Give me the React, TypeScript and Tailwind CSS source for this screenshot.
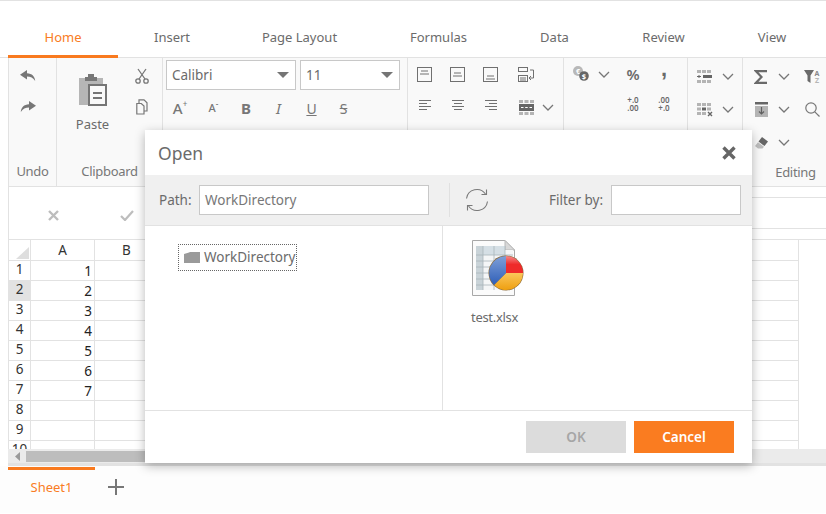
import type { ReactNode } from "react";

const tabs = [
  { name: "Home", w: "w-[110px]", active: true },
  { name: "Insert", w: "w-[108px]" },
  { name: "Page Layout", w: "w-[147px]" },
  { name: "Formulas", w: "w-[131px]" },
  { name: "Data", w: "w-[101px]" },
  { name: "Review", w: "w-[117px]" },
  { name: "View", w: "w-[100px]" },
];

const columns = ["A", "B", "C", "D", "E", "F", "G", "H", "I", "J", "K", ""];
const rows = [1, 2, 3, 4, 5, 6, 7, 8, 9, 10];

const Chevron = () => (
  <svg width="12" height="7" viewBox="0 0 12 7" fill="none" stroke="#777" strokeWidth="1.3" className="shrink-0">
    <path d="M1 1l5 5 5-5" />
  </svg>
);

const Caret = () => (
  <svg width="12" height="6" viewBox="0 0 12 6" fill="#757575">
    <path d="M0 0h12L6 6z" />
  </svg>
);

const Undo = ({ flip }: { flip?: boolean }) => (
  <svg width="16" height="12" viewBox="0 0 16 12" fill="#777" className={flip ? "-scale-x-100" : ""}>
    <path d="M7 0L0 4.8 7 9.6V6.6c3.4 0 6.3 1.400 8.200 4.400C15 6.800 12 3.200 7 3.200z" />
  </svg>
);

const PasteIcon = () => (
  <svg width="30" height="32" viewBox="0 0 30 32">
    <path d="M1 4h24v27H1z" fill="#b6b6b6" />
    <path d="M7 3h3V0h6v3h3v4H7z" fill="#777" />
    <path d="M11 11h17v20H11z" fill="#f9f9f9" stroke="#757575" strokeWidth="2" />
    <path d="M15 18h9v2h-9zM15 23h9v2h-9z" fill="#757575" />
  </svg>
);

const Scissors = () => (
  <svg width="14" height="16" viewBox="0 0 14 16" fill="none" stroke="#777" strokeWidth="1.300">
    <circle cx="3" cy="13" r="2.200" />
    <circle cx="11" cy="13" r="2.200" />
    <path d="M4 11L11 1M10 11L3 1" />
  </svg>
);

const CopyIcon = () => (
  <svg width="13" height="16" viewBox="0 0 13 16" fill="none" stroke="#777" strokeWidth="1.200">
    <path d="M3 4V.8h5l3 3V12H8" />
    <path d="M.8 4.500h4.500L8 7v8H.8z" fill="#f9f9f9" />
  </svg>
);

const VAlign = ({ y }: { y: number }) => (
  <svg width="16" height="16" viewBox="0 0 16 16" fill="none" stroke="#707070">
    <rect x=".5" y=".5" width="14" height="14" />
    <path d={`M4 ${y}h7M3 ${y + 3}h9`} />
  </svg>
);

const WrapIcon = () => (
  <svg width="17" height="15" viewBox="0 0 17 15" fill="none" stroke="#707070">
    <rect x=".5" y=".5" width="9" height="4" />
    <rect x=".5" y="8.500" width="9" height="6" />
    <path d="M2 11h6M2 13h6M12 3h3.500v8H11M13 9l-2 2 2 2" />
  </svg>
);

const HAlign = ({ mode }: { mode: "l" | "c" | "r" }) => {
  const short = mode === "l" ? "M0 3.500h8M0 9.500h8" : mode === "c" ? "M2 3.500h8M2 9.500h8" : "M4 3.500h8M4 9.500h8";
  return (
    <svg width="12" height="11" viewBox="0 0 12 11" fill="none" stroke="#707070">
      <path d={`M0 .5h12M0 6.500h12 ${short}`} />
    </svg>
  );
};

const MergeIcon = () => (
  <svg width="15" height="15" viewBox="0 0 15 15" className="shrink-0">
    <path d="M0 0h4v3H0zM5.500 0h4v3h-4zM11 0h4v3h-4zM0 12h4v3H0zM5.500 12h4v3h-4zM11 12h4v3h-4z" fill="#b4b4b4" />
    <path d="M0 4h15v7H0z" fill="#666" />
    <path d="M2 7h2.500v1H2zM6.200 7h2.500v1H6.200zM10.500 7H13v1h-2.500z" fill="#fff" />
  </svg>
);

const CurrencyIcon = () => (
  <svg width="16" height="15" viewBox="0 0 16 15">
    <circle cx="5" cy="5" r="5" fill="#b8b8b8" />
    <text x="5" y="7.500" textAnchor="middle" fontSize="7" fontWeight="700" fill="#fff" fontFamily="'Noto Sans', sans-serif">€</text>
    <circle cx="11" cy="10" r="4.800" fill="#666" />
    <text x="11" y="12.600" textAnchor="middle" fontSize="7.500" fontWeight="700" fill="#fff" fontFamily="'Noto Sans', sans-serif">$</text>
  </svg>
);

const CellsIcon = ({ del }: { del?: boolean }) => (
  <svg width="16" height="14" viewBox="0 0 16 14">
    {del ? (
      <>
        <path d="M0 0h4v3H0zM5 0h4v3H5zM10 0h4v3h-4zM0 4.500h4v3H0zM10 4.500h4v3h-4zM0 9h4v3H0zM5 9h4v3H5z" fill="#b4b4b4" />
        <path d="M5 4.500h4v3H5z" fill="#666" />
        <path d="M11 9l4 4M15 9l-4 4" stroke="#666" strokeWidth="1.400" />
      </>
    ) : (
      <>
        <path d="M0 0h4v3H0zM5 0h4v3H5zM10 0h4v3h-4zM0 10h4v3H0zM5 10h4v3H5zM10 10h4v3h-4z" fill="#b4b4b4" />
        <path d="M6 5h9v3H6z" fill="#666" />
        <path d="M0 6.500h4M2 5v3" stroke="#666" />
      </>
    )}
  </svg>
);

const SigmaIcon = () => (
  <svg width="14" height="14" viewBox="0 0 14 14" fill="none" stroke="#6a6a6a" strokeWidth="2.200">
    <path d="M13 1.200H2l5.500 5.800L2 12.800h11" />
  </svg>
);

const SortFilterIcon = () => (
  <svg width="16" height="14" viewBox="0 0 16 14">
    <path d="M0 0h10L6.500 5.500V13L3.500 11V5.500z" fill="#6a6a6a" />
    <text x="13" y="6" textAnchor="middle" fontSize="7" fontWeight="700" fill="#8a8a8a" fontFamily="'Noto Sans', sans-serif">A</text>
    <text x="13" y="13" textAnchor="middle" fontSize="7" fontWeight="700" fill="#b5b5b5" fontFamily="'Noto Sans', sans-serif">Z</text>
  </svg>
);

const FillIcon = () => (
  <svg width="13" height="15" viewBox="0 0 13 15">
    <path d="M0 0h13v2.500H0z" fill="#666" />
    <path d="M0 4h13v11H0z" fill="#b4b4b4" />
    <path d="M6.500 5v7M4 9.500l2.500 2.500L9 9.500" fill="none" stroke="#5f5f5f" strokeWidth="1.200" />
  </svg>
);

const SearchIcon = () => (
  <svg width="15" height="15" viewBox="0 0 15 15" fill="none" stroke="#777" strokeWidth="1.200">
    <circle cx="6" cy="6" r="5.200" />
    <path d="M9.800 9.800L14.500 14.500" />
  </svg>
);

const EraserIcon = () => (
  <svg width="13" height="12" viewBox="0 0 13 12">
    <path d="M7 0l6 4.500-3.500 4.500-6-4.500z" fill="#666" />
    <path d="M3 5.200l6 4.500L7.500 11.500H3L0 9z" fill="#bdbdbd" />
  </svg>
);

const RefreshIcon = () => (
  <svg width="24" height="24" viewBox="0 0 24 24" fill="none" stroke="#7a7a7a" strokeWidth="1.100">
    <path d="M1.500 10.500A10.500 10.500 0 0 1 20.500 6" />
    <path d="M21.500 1.500V6.500H16.500" />
    <path d="M22.500 13.500A10.500 10.500 0 0 1 3.500 18" />
    <path d="M2.500 22.500V17.500H7.500" />
  </svg>
);

const FolderIcon = () => (
  <svg width="16" height="11" viewBox="0 0 16 11" fill="#9a9a9a">
    <path d="M0 2l5-1.500 1-.5h10v11H0z" />
  </svg>
);

const FileIcon = () => (
  <svg width="54" height="58" viewBox="0 0 54 58">
    <defs>
      <linearGradient id="pieRed" x1="0" y1="0" x2="0" y2="1">
        <stop offset="0" stopColor="#f58a8a" />
        <stop offset="0.5" stopColor="#ee2a2a" />
      </linearGradient>
      <linearGradient id="pieOrange" x1="0" y1="0" x2="0" y2="1">
        <stop offset="0" stopColor="#fbc65a" />
        <stop offset="1" stopColor="#ee9f10" />
      </linearGradient>
      <linearGradient id="pieBlue" x1="0" y1="0" x2="0" y2="1">
        <stop offset="0" stopColor="#7e9fd8" />
        <stop offset="1" stopColor="#2f5fb8" />
      </linearGradient>
    </defs>
    <path d="M1.500 .5H34l9.500 9.500v45.500H1.500z" fill="#fbfbfb" stroke="#a8a8a8" />
    <path d="M34 .5V10h9.500z" fill="#d8d8d8" stroke="#b8b8b8" />
    <path d="M5 6h29v4h8v40H5z" fill="#f4f6f7" />
    <path d="M5 6h29v9H5z" fill="#d5dfe5" />
    <path d="M5 6h7v44H5z" fill="#c9d3d8" />
    <path d="M5 15h37M5 21h37M5 27h37M5 33h37M5 39h37M5 45h37M12 6v44M23 6v44M34 6v44" stroke="#a9b5ba" strokeWidth=".8" />
    <circle cx="35" cy="33" r="17.500" fill="#8a6a3a" />
    <path d="M35 33V16a17 17 0 0 1 17 17z" fill="url(#pieRed)" />
    <path d="M35 33h17a17 17 0 0 1-29 12z" fill="url(#pieOrange)" />
    <path d="M35 33L23 45A17 17 0 0 1 35 16z" fill="url(#pieBlue)" />
  </svg>
);

const Cell = ({ children, className = "" }: { children?: ReactNode; className?: string }) => (
  <div className={`flex items-center justify-center ${className}`}>{children}</div>
);

const Group = ({ label, w, children }: { label: string; w: string; children: ReactNode }) => (
  <div className={`${w} shrink-0 border-r border-[#e2e2e2] flex flex-col justify-between h-[128px]`}>
    <div className="flex-1">{children}</div>
    <div className="h-[28px] flex items-center justify-center text-[13px] text-[#777] tracking-[-0.3px]">{label}</div>
  </div>
);

export default function App() {
  return (
    <div className="relative w-[826px] h-[514px] overflow-hidden bg-white border-t border-[#e2e2e2] font-['Noto_Sans',sans-serif] text-[13.500px] text-[#6b6b6b]">
      {/* TABS */}
      <div className="flex h-[57px] pl-2 border-b border-[#e2e2e2] text-[13px]">
        {tabs.map((t) => (
          <div
            key={t.name}
            className={`${t.w} h-[57px] flex items-center justify-center pt-[19px] shrink-0 ${
              t.active ? "text-[#f97c24] border-b-[3px] border-[#f97a1f]" : "pb-[3px]"
            }`}
          >
            {t.name}
          </div>
        ))}
      </div>

      {/* RIBBON */}
      <div className="ml-2 flex h-[129px] bg-[#f9f9f9] border-b border-l border-[#e2e2e2]">
        <Group label="Undo" w="w-[48px]">
          <div className="grid grid-rows-[31px_31px] pt-[2px] w-[37px]">
            <Cell><Undo /></Cell>
            <Cell><Undo flip /></Cell>
          </div>
        </Group>

        <Group label="Clipboard" w="w-[106px]">
          <div className="flex">
            <div className="w-[71px] flex flex-col items-center pt-[16px]">
              <PasteIcon />
              <div className="mt-[8px] leading-[20px] text-[13px]">Paste</div>
            </div>
            <div className="grid grid-rows-[31px_31px] pt-[2px] w-[30px] ml-[-1px]">
              <Cell><Scissors /></Cell>
              <Cell><CopyIcon /></Cell>
            </div>
          </div>
        </Group>

        <Group label="Font" w="w-[245px]">
          <div className="flex gap-[4px] pl-[3px] pt-[2px]">
            <div className="w-[130px] h-[30px] bg-white border border-[#c8c8c8] flex items-center justify-between pl-[5px] pr-[6px]">
              Calibri <Caret />
            </div>
            <div className="w-[100px] h-[30px] bg-white border border-[#c8c8c8] flex items-center justify-between pl-[5px] pr-[6px]">
              11 <Caret />
            </div>
          </div>
          <div className="flex mt-[3px] h-[30px] text-[#777]">
            <Cell className="w-[34px] text-[15px] font-medium">A<span className="text-[8px] mb-2">+</span></Cell>
            <Cell className="w-[33px] text-[11px] font-medium">A<span className="text-[8px] mb-2">-</span></Cell>
            <Cell className="w-[32px] text-[15px] font-bold">B</Cell>
            <Cell className="w-[33px] text-[15px] italic">I</Cell>
            <Cell className="w-[33px] text-[14px] underline">U</Cell>
            <Cell className="w-[31px] text-[14px] line-through">S</Cell>
          </div>
        </Group>

        <Group label="Alignment" w="w-[156px]">
          <div className="grid grid-cols-[34px_32px_33px_38px_5px] grid-rows-[31px_31px] pt-[1px]">
            <Cell><VAlign y={4} /></Cell>
            <Cell><VAlign y={6} /></Cell>
            <Cell><VAlign y={9} /></Cell>
            <Cell><WrapIcon /></Cell>
            <div />
            <Cell><HAlign mode="l" /></Cell>
            <Cell><HAlign mode="c" /></Cell>
            <Cell><HAlign mode="r" /></Cell>
            <Cell className="pt-[3px]"><MergeIcon /></Cell>
            <Cell className="pt-[3px]"><Chevron /></Cell>
          </div>
        </Group>

        <Group label="Number" w="w-[124px]">
          <div className="grid grid-cols-[30px_20px_38px_24px] grid-rows-[30px_30px] pt-[1px] text-[#6a6a6a]">
            <Cell className="pl-[3px] pb-[1px]"><CurrencyIcon /></Cell>
            <Cell><Chevron /></Cell>
            <Cell className="text-[15px] font-semibold">%</Cell>
            <Cell className="text-[22px] font-black pb-[11px] not-italic font-['Liberation_Sans',sans-serif]">,</Cell>
            <div />
            <div />
            <Cell className="flex-col text-[8px] leading-[8px] font-semibold"><span>+.0</span><span>.00</span></Cell>
            <Cell className="flex-col text-[8px] leading-[8px] font-semibold"><span>.00</span><span>+.0</span></Cell>
          </div>
        </Group>

        <Group label="Cells" w="w-[55px]">
          <div className="grid grid-cols-[34px_12px] grid-rows-[33px_33px] pt-[2px]">
            <Cell><CellsIcon /></Cell>
            <Cell><Chevron /></Cell>
            <Cell><CellsIcon del /></Cell>
            <Cell><Chevron /></Cell>
          </div>
        </Group>

        <Group label="Editing" w="w-[106px]">
          <div className="grid grid-cols-[36px_10px_46px] grid-rows-[33px_33px_33px] pt-[2px]">
            <Cell><SigmaIcon /></Cell>
            <Cell><Chevron /></Cell>
            <Cell><SortFilterIcon /></Cell>
            <Cell><FillIcon /></Cell>
            <Cell><Chevron /></Cell>
            <Cell><SearchIcon /></Cell>
            <Cell><EraserIcon /></Cell>
            <Cell><Chevron /></Cell>
            <div />
          </div>
        </Group>
      </div>

      {/* FORMULA BAR */}
      <div className="ml-2 flex h-[52px] border-l border-[#e2e2e2]">
        <div className="w-[160px] flex items-center pt-[4px] shrink-0">
          <svg width="11" height="11" viewBox="0 0 11 11" className="ml-[39px]" stroke="#bdbdbd" strokeWidth="2.400">
            <path d="M1 1l9 9M10 1l-9 9" />
          </svg>
          <svg width="14" height="11" viewBox="0 0 14 11" fill="none" className="ml-[61px]" stroke="#bdbdbd" strokeWidth="2.200">
            <path d="M1 6l4 4 8-9" />
          </svg>
        </div>
        <div className="flex-1 mt-[10px] h-[32px] border-y border-[#e2e2e2]" />
      </div>

      {/* GRID */}
      <div className="ml-2 h-[210px] overflow-hidden border-l border-t border-[#e2e2e2] text-[#333] text-[13.500px]">
        <div className="grid grid-cols-[22px_repeat(12,64px)] grid-rows-[21px] auto-rows-[20px]">
          <div className="border-r border-b border-[#e2e2e2] flex items-end justify-end pr-[1px] pb-[1px]">
            <svg width="13" height="12" viewBox="0 0 13 12" fill="#dedede">
              <path d="M13 0v12H0z" />
            </svg>
          </div>
          {columns.map((c, i) => (
            <div key={i} className="border-r border-b border-[#e2e2e2] flex items-center justify-center">
              {c}
            </div>
          ))}
          {rows.map((r) => (
            <div key={r} className="contents">
              <div className={`border-r border-b border-[#e2e2e2] flex items-center justify-center pb-[3px] ${r === 2 ? "bg-[#e2e2e2]" : ""}`}>
                {r}
              </div>
              {columns.map((c, i) => (
                <div key={i} className="border-r border-b border-[#e2e2e2] flex items-center justify-end pr-[2px] pt-[1px] text-[#222]">
                  {c === "A" && r <= 7 ? r : ""}
                </div>
              ))}
            </div>
          ))}
        </div>
      </div>

      {/* SCROLLBAR */}
      <div className="ml-2 h-[17px] bg-[#ebebeb] flex items-center border-b-[3px] border-[#e2e2e2]">
        <div className="w-[18px] flex justify-center">
          <svg width="5" height="9" viewBox="0 0 5 9" fill="#9a9a9a">
            <path d="M5 0v9L0 4.500z" />
          </svg>
        </div>
        <div className="w-[680px] h-[11px] bg-[#bdbdbd]" />
      </div>

      {/* SHEETS */}
      <div className="flex items-start pl-2 bg-[#fdfdfd] h-[47px] pt-[1px]">
        <div className="w-[87px] h-[37px] border-t-[3px] border-[#f97a1f] text-[#f97c24] flex items-center justify-center pt-[2px] text-[13px]">
          Sheet1
        </div>
        <svg width="16" height="16" viewBox="0 0 16 16" stroke="#777" strokeWidth="2" className="ml-[13px] mt-[12px]">
          <path d="M8 0v16M0 8h16" />
        </svg>
      </div>

      {/* OPEN DIALOG */}
      <div className="absolute left-[145px] top-[129px] w-[607px] h-[333px] bg-white flex flex-col shadow-[0_3px_10px_rgba(0,0,0,0.28)]">
        <div className="h-[45px] flex items-center justify-between pl-[13px] pr-[16px] shrink-0">
          <span className="text-[17.500px] text-[#6b6b6b] pt-[2px]">Open</span>
          <svg width="14" height="14" viewBox="0 0 14 14" stroke="#666" strokeWidth="3.400">
            <path d="M1.500 1.500l11 11M12.500 1.500l-11 11" />
          </svg>
        </div>

        <div className="h-[51px] shrink-0 bg-[#f0f0f0] border-b border-[#e2e2e2] flex items-center">
          <span className="ml-[14px] w-[40px]">Path:</span>
          <div className="w-[230px] h-[30px] bg-white border border-[#c8c8c8] flex items-center pl-[5px] text-[#777]">
            WorkDirectory
          </div>
          <div className="ml-[20px] w-px h-[34px] bg-[#e0e0e0]" />
          <div className="ml-[15px]"><RefreshIcon /></div>
          <span className="ml-[60px] w-[62px]">Filter by:</span>
          <div className="w-[130px] h-[30px] bg-white border border-[#c8c8c8]" />
        </div>

        <div className="flex-1 flex min-h-0">
          <div className="w-[298px] border-r border-[#e2e2e2] pl-[33px] pt-[18px]">
            <div className="w-[119px] h-[27px] border border-dotted border-[#666] flex items-center pl-[5px] gap-[4px]">
              <FolderIcon />
              <span>WorkDirectory</span>
            </div>
          </div>
          <div className="flex-1 pl-[28px] pt-[14px]">
            <FileIcon />
            <div className="mt-[9px] leading-[20px] text-[13px] tracking-[-0.3px]">test.xlsx</div>
          </div>
        </div>

        <div className="h-[53px] shrink-0 border-t border-[#e2e2e2] flex justify-end items-start gap-[8px] pt-[10px] pr-[18px]">
          <div className="w-[100px] h-[32px] bg-[#dcdcdc] text-[#a6a6a6] font-semibold flex items-center justify-center">OK</div>
          <div className="w-[100px] h-[32px] bg-[#fa7c20] text-white font-semibold flex items-center justify-center">Cancel</div>
        </div>
      </div>
    </div>
  );
}
